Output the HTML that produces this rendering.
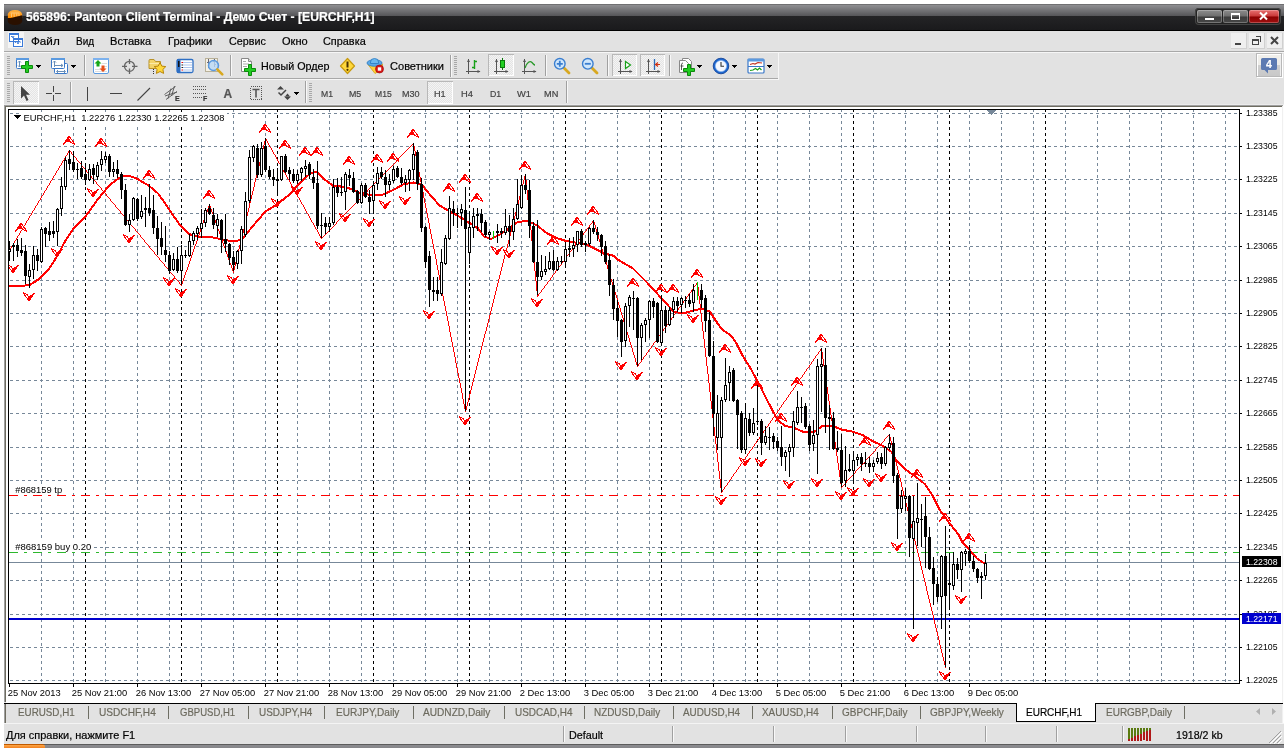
<!DOCTYPE html>
<html><head><meta charset="utf-8"><title>565896: Panteon Client Terminal</title>
<style>
html,body{margin:0;padding:0;background:#fff;}
body{width:1288px;height:748px;overflow:hidden;position:relative;font-family:"Liberation Sans",sans-serif;font-size:11px;color:#000;}
.a{position:absolute;}
.t{position:absolute;white-space:nowrap;line-height:1;-webkit-text-stroke:0.2px currentColor;}
svg{position:absolute;overflow:visible;}
</style></head><body><div id="w" style="position:absolute;left:0;top:0;width:1288px;height:748px;will-change:transform">
<div class="a" style="left:4px;top:4px;width:1280px;height:744px;background:#e2e2e2"></div>
<div class="a" style="left:4px;top:4px;width:1280px;height:27px;background:linear-gradient(#707072 0,#707072 1px,#8f8f92 1px,#555558 12px,#242426 12px,#1a1a1c 26px,#000 26px,#000 27px)"></div>
<svg width="16" height="16" viewBox="0 0 18 18" style="left:7px;top:8.5px"><linearGradient id="og" x1="0" y1="0" x2="0" y2="1"><stop offset="0" stop-color="#ffb347"/><stop offset="0.55" stop-color="#ff8c00"/><stop offset="0.56" stop-color="#3a1800"/><stop offset="1" stop-color="#1a0a00"/></linearGradient><path d="M1 6a8 5 0 0 1 16 0v7a8 4 0 0 1-16 0z" fill="url(#og)"/><path d="M1 11l16-4v7a8 4 0 0 1-16 0z" fill="#2a1000"/><path d="M4 4.500h10M5 5v4M8 5v4M11 5v3M13.500 5v3" stroke="#ffd9a0" stroke-width="1" fill="none" opacity=".8"/></svg>
<div class="t" style="left:26.4px;top:10.5px;font-size:12.5px;color:#fff;font-weight:bold;transform:scaleX(0.9755);transform-origin:0 0;">565896: Panteon Client Terminal - Демо Счет - [EURCHF,H1]</div>
<div class="a" style="left:1195px;top:8px;width:86px;height:17px;border-radius:4px;background:#222;box-shadow:inset 0 0 0 1px #444"></div>
<div class="a" style="left:1197px;top:10px;width:25px;height:13px;border-radius:2px;background:linear-gradient(#8c8c8c 0,#6e6e6e 48%,#3c3c3c 52%,#484848 100%);box-shadow:inset 0 0 0 1px rgba(255,255,255,.25)"></div>
<div class="a" style="left:1223px;top:10px;width:25px;height:13px;border-radius:2px;background:linear-gradient(#8c8c8c 0,#6e6e6e 48%,#3c3c3c 52%,#484848 100%);box-shadow:inset 0 0 0 1px rgba(255,255,255,.25)"></div>
<div class="a" style="left:1249px;top:10px;width:30px;height:13px;border-radius:2px;background:linear-gradient(#e87070 0,#c83838 48%,#8a0000 52%,#a01010 100%);box-shadow:inset 0 0 0 1px rgba(255,255,255,.25)"></div>
<svg width="86" height="17" viewBox="0 0 86 17" style="left:1195px;top:8px" shape-rendering="crispEdges"><rect x="10" y="10" width="9" height="2" fill="#fff"/><path d="M36.500 5.500h8v6h-8z" stroke="#fff" fill="none"/><rect x="36" y="5" width="9" height="2" fill="#fff"/><path d="M65 4.500l7 7M72 4.500l-7 7" stroke="#fff" stroke-width="2" fill="none" shape-rendering="auto"/></svg>
<svg width="16" height="16" viewBox="0 0 16 16" style="left:8px;top:32px" shape-rendering="crispEdges"><rect x="0" y="0" width="16" height="16" fill="#f4f4f4"/><path d="M1.500 1.500h9v8h-9zM5.500 6.500h9v8h-9z" fill="#fff" stroke="#3b7ad9"/><path d="M1 2.500h10M5 7.500h10" stroke="#3b7ad9" stroke-width="1"/><path d="M3 5l1-1 1 2 1-2M7 11l1.500-2 1.500 3 1.500-3 1 1.500" stroke="#3b7ad9" fill="none" shape-rendering="auto"/></svg>
<div class="t" style="left:30.6px;top:35.5px;font-size:11px;color:#000;transform:scaleX(1.0611);transform-origin:0 0;">Файл</div>
<div class="t" style="left:75.5px;top:35.5px;font-size:11px;color:#000;transform:scaleX(0.9093);transform-origin:0 0;">Вид</div>
<div class="t" style="left:110.4px;top:35.5px;font-size:11px;color:#000;transform:scaleX(1.0100);transform-origin:0 0;">Вставка</div>
<div class="t" style="left:168.4px;top:35.5px;font-size:11px;color:#000;transform:scaleX(1.0084);transform-origin:0 0;">Графики</div>
<div class="t" style="left:228.6px;top:35.5px;font-size:11px;color:#000;transform:scaleX(0.9795);transform-origin:0 0;">Сервис</div>
<div class="t" style="left:281.6px;top:35.5px;font-size:11px;color:#000;transform:scaleX(1.0015);transform-origin:0 0;">Окно</div>
<div class="t" style="left:323.3px;top:35.5px;font-size:11px;color:#000;transform:scaleX(0.9894);transform-origin:0 0;">Справка</div>
<div class="a" style="left:1231px;top:33px;width:16px;height:16px;background:#efefef;box-shadow:inset -1px -1px 0 #d0d0d0"></div>
<div class="a" style="left:1249px;top:33px;width:16px;height:16px;background:#efefef;box-shadow:inset -1px -1px 0 #d0d0d0"></div>
<div class="a" style="left:1267px;top:33px;width:16px;height:16px;background:#efefef;box-shadow:inset -1px -1px 0 #d0d0d0"></div>
<svg width="52" height="16" viewBox="0 0 52 16" style="left:1231px;top:33px" shape-rendering="crispEdges"><rect x="4" y="10" width="6" height="2" fill="#444"/><path d="M24.500 3.500h5v5M21.500 6.500h6v5h-6z" stroke="#444" fill="none"/><rect x="21" y="6" width="7" height="2" fill="#444"/><path d="M40 4l7 7M47 4l-7 7" stroke="#444" stroke-width="2" fill="none" shape-rendering="auto"/></svg>
<div class="a" style="left:4px;top:51px;width:1280px;height:1px;background:#a8a8a8"></div><div class="a" style="left:4px;top:52px;width:1280px;height:1px;background:#f6f6f6"></div>
<div class="a" style="left:4px;top:78px;width:775px;height:1px;background:#a8a8a8"></div><div class="a" style="left:4px;top:79px;width:775px;height:1px;background:#f6f6f6"></div>
<div class="a" style="left:778px;top:53px;width:1px;height:26px;background:#f6f6f6"></div>
<div class="a" style="left:4px;top:104px;width:1280px;height:1px;background:#ebebeb"></div>
<div class="a" style="left:4px;top:105px;width:1279px;height:1px;background:#a0a0a0"></div>
<div class="a" style="left:4px;top:105px;width:1px;height:597px;background:#a0a0a0"></div>
<div class="a" style="left:5px;top:106px;width:1277px;height:1px;background:#6e6c60"></div>
<div class="a" style="left:5px;top:106px;width:1px;height:596px;background:#6e6c60"></div>
<div class="a" style="left:6px;top:107px;width:1276px;height:2px;background:#fff"></div>
<div class="a" style="left:6px;top:107px;width:2px;height:596px;background:#fff"></div>
<div class="a" style="left:1282px;top:106px;width:1px;height:617px;background:#f0f0f0"></div>
<div class="a" style="left:1283px;top:105px;width:1px;height:618px;background:#fdfdfd"></div>
<svg width="4" height="20" style="left:7px;top:56px" shape-rendering="crispEdges"><path d="M0 0.5h3M0 2.5h3M0 4.5h3M0 6.5h3M0 8.5h3M0 10.5h3M0 12.5h3M0 14.5h3M0 16.5h3M0 18.5h3" stroke="#a8a8a8"/></svg>
<svg width="4" height="20" style="left:454px;top:56px" shape-rendering="crispEdges"><path d="M0 0.5h3M0 2.5h3M0 4.5h3M0 6.5h3M0 8.5h3M0 10.5h3M0 12.5h3M0 14.5h3M0 16.5h3M0 18.5h3" stroke="#a8a8a8"/></svg>
<svg width="4" height="20" style="left:7px;top:83px" shape-rendering="crispEdges"><path d="M0 0.5h3M0 2.5h3M0 4.5h3M0 6.5h3M0 8.5h3M0 10.5h3M0 12.5h3M0 14.5h3M0 16.5h3M0 18.5h3" stroke="#a8a8a8"/></svg>
<svg width="4" height="20" style="left:309px;top:83px" shape-rendering="crispEdges"><path d="M0 0.5h3M0 2.5h3M0 4.5h3M0 6.5h3M0 8.5h3M0 10.5h3M0 12.5h3M0 14.5h3M0 16.5h3M0 18.5h3" stroke="#a8a8a8"/></svg>
<div class="a" style="left:450px;top:55px;width:1px;height:22px;background:#a0a0a0"></div><div class="a" style="left:451px;top:55px;width:1px;height:22px;background:#f8f8f8"></div>
<div class="a" style="left:305px;top:81px;width:1px;height:22px;background:#a0a0a0"></div><div class="a" style="left:306px;top:81px;width:1px;height:22px;background:#f8f8f8"></div>
<div class="a" style="left:566px;top:81px;width:1px;height:22px;background:#a0a0a0"></div><div class="a" style="left:567px;top:81px;width:1px;height:22px;background:#f8f8f8"></div><svg width="20" height="18" viewBox="0 0 20 18" style="left:15px;top:57px"><rect x="1.500" y="1.500" width="12" height="10" rx="1" fill="#fff" stroke="#3a78c8"/><rect x="1" y="1" width="13" height="2" fill="#5b9ae0"/><path d="M4.500 4v6M3 5.500l1.500-1.500 1.500 1.500M3 8.500l1.500 1.500 1.500-1.500" stroke="#6a8fb8" fill="none"/><path d="M10.500 4.500h3v4h4v3h-4v4h-3v-4h-4v-3h4z" fill="#22cc22" stroke="#0a8a0a" stroke-width="1"/></svg>
<svg width="5" height="3" style="left:36px;top:65px" shape-rendering="crispEdges"><path d="M0 0h5v1h-1v1h-1v1h-1v-1h-1v-1h-1z" fill="#000"/></svg>
<svg width="20" height="18" viewBox="0 0 20 18" style="left:50px;top:57px"><rect x="4.500" y="6.500" width="13" height="10" rx="1" fill="#fff" stroke="#3a78c8"/><rect x="1.500" y="1.500" width="13" height="10" rx="1" fill="#fff" stroke="#3a78c8"/><rect x="1" y="1" width="14" height="2" fill="#5b9ae0"/><path d="M4.500 4v6M3 5.500l1.500-1.500 1.500 1.500M5 8.500h8M11 7l2 1.500-2 1.500M7 14.500h8M8 13l-1.500 1.500 1.500 1.500M14 13l1.500 1.500-1.500 1.500" stroke="#6a8fb8" fill="none"/></svg>
<svg width="5" height="3" style="left:71px;top:65px" shape-rendering="crispEdges"><path d="M0 0h5v1h-1v1h-1v1h-1v-1h-1v-1h-1z" fill="#000"/></svg>
<div class="a" style="left:84px;top:55px;width:1px;height:21px;background:#a0a0a0"></div><div class="a" style="left:85px;top:55px;width:1px;height:21px;background:#f8f8f8"></div>
<svg width="16" height="16" viewBox="0 0 16 16" style="left:93px;top:58px"><rect x="0.500" y="0.500" width="15" height="15" rx="1.500" fill="#fff" stroke="#5b9ae0"/><rect x="0" y="0" width="16" height="2" fill="#7db2ee"/><path d="M9 5.500h5M9 8.500h5M2 11.500h5M2 13.500h12" stroke="#ddd"/><path d="M5 2l3.500 3.500h-2v3h-3v-3h-2z" fill="#18a818"/><path d="M10 14l-3.500-3.500h2v-3h3v3h2z" fill="#e8501a"/></svg>
<svg width="18" height="17" viewBox="0 0 18 17" style="left:121px;top:58px"><circle cx="8.500" cy="8.300" r="5" fill="none" stroke="#666" stroke-width="1.300"/><path d="M8.500 1v5M8.500 10.500v5.500M1 8.300h5M11 8.300h5.500" stroke="#666" stroke-width="1.300"/></svg>
<svg width="19" height="18" viewBox="0 0 19 18" style="left:148px;top:57px"><path d="M1 3.500a1 1 0 0 1 1-1h4l1.500 2h5v7h-11.500z" fill="#f3d46b" stroke="#b8922a"/><path d="M1.500 6.500h11" stroke="#fbeaa8"/><path d="M5.500 12v5" stroke="#333" stroke-dasharray="1 1"/><path d="M12 5.500l1.800 3.600 4 .5-2.900 2.800.7 4-3.600-1.900-3.600 1.900.7-4-2.900-2.800 4-.5z" fill="#ffd83a" stroke="#b8860b" stroke-width="1"/></svg>
<svg width="18" height="16" viewBox="0 0 18 16" style="left:176px;top:58px"><rect x="1" y="1.500" width="16" height="13" rx="1.500" fill="#fff" stroke="#2e6fc4" stroke-width="1.300"/><rect x="1" y="1" width="3.500" height="14" fill="#2e6fc4"/><rect x="2" y="3" width="1.500" height="6" fill="#111"/><path d="M7 4.500h9M7 7h9M7 9.500h9M7 12h9" stroke="#9ab8e8" stroke-width=".8"/><path d="M5.500 4h1.500v1h-1.500zM5.500 11.500h1.500v1h-1.500z" fill="#e00"/><path d="M5.500 6.500h1.500v1h-1.500zM5.500 9h1.500v1h-1.500z" fill="#222"/></svg>
<svg width="20" height="20" viewBox="0 0 20 20" style="left:204px;top:57px"><rect x="1.500" y="1.500" width="12" height="13" fill="#f4f0e4" stroke="#b8b098"/><path d="M4.500 2v9M3 5.500h1.500M4.500 8h1.500M10.500 2v8M9 4.500h1.500M10.500 7.500h1.500" stroke="#667" /><circle cx="9.500" cy="8.500" r="5" fill="#b8d8f8" fill-opacity=".8" stroke="#5b9ae0" stroke-width="1.500"/><path d="M13.300 12.300l5 5" stroke="#d8a820" stroke-width="2.600" stroke-linecap="round"/></svg>
<div class="a" style="left:230px;top:55px;width:1px;height:21px;background:#a0a0a0"></div><div class="a" style="left:231px;top:55px;width:1px;height:21px;background:#f8f8f8"></div>
<svg width="17" height="20" viewBox="0 0 17 20" style="left:240px;top:57px"><path d="M1.500 1.500h7l3 3v10h-10z" fill="#fff" stroke="#888"/><path d="M8.500 1.500v3h3" fill="#ddd" stroke="#888"/><path d="M3 4.500h3M3 7h6M3 9.500h4" stroke="#aaa"/><path d="M8.500 7.500h3v4h4v3h-4v4h-3v-4h-4v-3h4z" fill="#22cc22" stroke="#0a8a0a"/></svg>
<div class="t" style="left:260.5px;top:61px;font-size:11px;color:#000;transform:scaleX(0.9773);transform-origin:0 0;">Новый Ордер</div>
<svg width="17" height="18" viewBox="0 0 17 18" style="left:339px;top:57px"><path d="M8.500 1.500l7 7.500-7 7.500-7-7.500z" fill="#ffd83a" stroke="#c89a10" stroke-width="1.200" stroke-linejoin="round"/><path d="M8.500 4.500v6" stroke="#4a3200" stroke-width="2"/><circle cx="8.500" cy="12.800" r="1.100" fill="#4a3200"/></svg>
<svg width="19" height="18" viewBox="0 0 19 18" style="left:366px;top:57px"><path d="M2 7.500l7 9 7-4.500.5-5z" fill="#ffd23a" stroke="#d8a010" stroke-width=".8"/><ellipse cx="8.500" cy="6" rx="7.500" ry="3.300" fill="#5aa8e8" stroke="#2a78c0" stroke-width=".8"/><path d="M4.500 5a4 3.500 0 0 1 8 0v1.500h-8z" fill="#6ab8f0" stroke="#2a78c0" stroke-width=".8"/><circle cx="13.500" cy="12" r="4" fill="#d81818" stroke="#900" stroke-width=".6"/><rect x="11.800" y="10.300" width="3.400" height="3.400" fill="#fff"/></svg>
<div class="t" style="left:390px;top:61px;font-size:11px;color:#000;transform:scaleX(1.0047);transform-origin:0 0;">Советники</div>
<svg width="16" height="16" viewBox="0 0 16 16" style="left:466px;top:58px"><path d="M2.500 1v15M0 13.500h14" stroke="#555" stroke-width="1" shape-rendering="crispEdges"/><path d="M1 4h3l-1.500-3zM11.500 12v3l3-1.500z" fill="#555"/><path d="M8.500 2v9M8.500 3.500h2.500M6 9.500h2.500" stroke="#18a018" stroke-width="1.400" fill="none"/></svg>
<div class="a" style="left:488px;top:54px;width:26px;height:22px;background:#f4f4f4;box-shadow:inset 1px 1px 0 #b8b8b8, inset -1px -1px 0 #fff;background-image:linear-gradient(45deg,#e4e4e4 25%,transparent 25%,transparent 75%,#e4e4e4 75%),linear-gradient(45deg,#e4e4e4 25%,transparent 25%,transparent 75%,#e4e4e4 75%);background-size:2px 2px;background-position:0 0,1px 1px"></div>
<svg width="16" height="16" viewBox="0 0 16 16" style="left:494px;top:58px"><path d="M2.500 1v15M0 13.500h14" stroke="#555" stroke-width="1" shape-rendering="crispEdges"/><path d="M1 4h3l-1.500-3zM11.500 12v3l3-1.500z" fill="#555"/><path d="M8.500 0v12" stroke="#0a7a0a"/><rect x="6.500" y="2.500" width="4" height="7" fill="#22d022" stroke="#0a7a0a"/></svg>
<svg width="16" height="16" viewBox="0 0 16 16" style="left:522px;top:58px"><path d="M2.500 1v15M0 13.500h14" stroke="#555" stroke-width="1" shape-rendering="crispEdges"/><path d="M1 4h3l-1.500-3zM11.500 12v3l3-1.500z" fill="#555"/><path d="M3 10c2-6 5-7.500 7-5.500s2 2.500 3 2.500" stroke="#2a9a2a" stroke-width="1.300" fill="none"/></svg>
<div class="a" style="left:545px;top:55px;width:1px;height:21px;background:#a0a0a0"></div><div class="a" style="left:546px;top:55px;width:1px;height:21px;background:#f8f8f8"></div>
<svg width="18" height="18" viewBox="0 0 18 18" style="left:553px;top:57px"><path d="M10.500 10.500l5.500 5.500" stroke="#d8a820" stroke-width="2.800" stroke-linecap="round"/><circle cx="6.800" cy="6.800" r="5.300" fill="#cfe6fb" stroke="#3a7ed0" stroke-width="1.400"/><path d="M3.800 6.800h6M6.800 3.800v6" stroke="#3a7ed0" stroke-width="1.800"/></svg>
<svg width="18" height="18" viewBox="0 0 18 18" style="left:581px;top:57px"><path d="M10.500 10.500l5.500 5.500" stroke="#d8a820" stroke-width="2.800" stroke-linecap="round"/><circle cx="6.800" cy="6.800" r="5.300" fill="#cfe6fb" stroke="#3a7ed0" stroke-width="1.400"/><path d="M3.800 6.800h6" stroke="#3a7ed0" stroke-width="1.800"/></svg>
<div class="a" style="left:607px;top:55px;width:1px;height:21px;background:#a0a0a0"></div><div class="a" style="left:608px;top:55px;width:1px;height:21px;background:#f8f8f8"></div>
<div class="a" style="left:612px;top:54px;width:25px;height:22px;background:#f4f4f4;box-shadow:inset 1px 1px 0 #b8b8b8, inset -1px -1px 0 #fff;background-image:linear-gradient(45deg,#e4e4e4 25%,transparent 25%,transparent 75%,#e4e4e4 75%),linear-gradient(45deg,#e4e4e4 25%,transparent 25%,transparent 75%,#e4e4e4 75%);background-size:2px 2px;background-position:0 0,1px 1px"></div>
<svg width="16" height="16" viewBox="0 0 16 16" style="left:618px;top:58px"><path d="M2.500 1v15M0 13.500h14" stroke="#555" stroke-width="1" shape-rendering="crispEdges"/><path d="M1 4h3l-1.500-3zM11.500 12v3l3-1.500z" fill="#555"/><path d="M7.500 3.500l5 3.500-5 3.500z" fill="#fff" stroke="#18a018" stroke-width="1.200"/></svg>
<div class="a" style="left:640px;top:54px;width:25px;height:22px;background:#f4f4f4;box-shadow:inset 1px 1px 0 #b8b8b8, inset -1px -1px 0 #fff;background-image:linear-gradient(45deg,#e4e4e4 25%,transparent 25%,transparent 75%,#e4e4e4 75%),linear-gradient(45deg,#e4e4e4 25%,transparent 25%,transparent 75%,#e4e4e4 75%);background-size:2px 2px;background-position:0 0,1px 1px"></div>
<svg width="16" height="16" viewBox="0 0 16 16" style="left:646px;top:58px"><path d="M2.500 1v15M0 13.500h14" stroke="#555" stroke-width="1" shape-rendering="crispEdges"/><path d="M1 4h3l-1.500-3zM11.500 12v3l3-1.500z" fill="#555"/><path d="M8.500 1v11" stroke="#2a6ab8" stroke-width="1.300"/><path d="M14 6.500h-4M12 4.500l-2.500 2 2.500 2" stroke="#d03010" stroke-width="1.200" fill="none"/></svg>
<div class="a" style="left:669px;top:55px;width:1px;height:21px;background:#a0a0a0"></div><div class="a" style="left:670px;top:55px;width:1px;height:21px;background:#f8f8f8"></div>
<svg width="18" height="20" viewBox="0 0 18 20" style="left:678px;top:57px"><path d="M4.500 1.500h6l3 3v9h-9z" fill="#fff" stroke="#888"/><path d="M1.500 3.500h6l3 3v9h-9z" fill="#fff" stroke="#888"/><path d="M5 6c-1.500 0-1.500 1.500-1.500 3v4M2.500 9h3" stroke="#444" fill="none" stroke-width=".9"/><path d="M9.500 7.500h3v4h4v3h-4v4h-3v-4h-4v-3h4z" fill="#22cc22" stroke="#0a8a0a"/></svg>
<svg width="5" height="3" style="left:697px;top:65px" shape-rendering="crispEdges"><path d="M0 0h5v1h-1v1h-1v1h-1v-1h-1v-1h-1z" fill="#000"/></svg>
<svg width="18" height="18" viewBox="0 0 18 18" style="left:712px;top:57px"><circle cx="9" cy="9" r="7.800" fill="#1e68d0" stroke="#0a3a90" stroke-width=".8"/><circle cx="9" cy="9" r="5.600" fill="#f4f8ff" stroke="#9ac0f0" stroke-width=".6"/><path d="M9 5v4.300h3" stroke="#333" stroke-width="1.100" fill="none"/></svg>
<svg width="5" height="3" style="left:732px;top:65px" shape-rendering="crispEdges"><path d="M0 0h5v1h-1v1h-1v1h-1v-1h-1v-1h-1z" fill="#000"/></svg>
<svg width="18" height="16" viewBox="0 0 18 16" style="left:747px;top:58px"><rect x="1" y="1" width="16" height="14" rx="1" fill="#fff" stroke="#3a78c8" stroke-width="1.200"/><rect x="1" y="1" width="16" height="2.500" fill="#5b9ae0"/><path d="M1 8.500h16" stroke="#3a78c8"/><path d="M3 6.500l3-1 2 .5 3-1.500 4 .5" stroke="#c03020" stroke-width="1.200" fill="none"/><path d="M3 12.500l3-.5 2.500-1.500 2 1.500 2-2 2 2" stroke="#18a018" stroke-width="1.200" fill="none"/></svg>
<svg width="5" height="3" style="left:767px;top:65px" shape-rendering="crispEdges"><path d="M0 0h5v1h-1v1h-1v1h-1v-1h-1v-1h-1z" fill="#000"/></svg>
<div class="a" style="left:1256px;top:53px;width:26px;height:24px;box-sizing:border-box;border:1px solid #b8b8b8;background:linear-gradient(#f0efeb 0,#eeede9 50%,#d0d0d0 50%,#c8c8c8 100%);box-shadow:inset 1px 1px 0 #fff,inset -1px 0 0 #eee,1px 1px 0 #fff"></div>
<svg width="16" height="16" viewBox="0 0 16 16" style="left:1261px;top:58px"><path d="M1.500 0h13a1.500 1.500 0 0 1 1.500 1.500v9a1.500 1.500 0 0 1-1.500 1.500h-7.500v3.500l-3.500-3.500h-2a1.500 1.500 0 0 1-1.500-1.500v-9a1.500 1.500 0 0 1 1.500-1.500z" fill="#5c7ab2"/></svg>
<div class="t" style="left:1266px;top:58.5px;font-size:10.5px;color:#fff;font-weight:bold;">4</div>
<div class="a" style="left:13px;top:81px;width:26px;height:23px;background:#f4f4f4;box-shadow:inset 1px 1px 0 #b8b8b8, inset -1px -1px 0 #fff;background-image:linear-gradient(45deg,#e4e4e4 25%,transparent 25%,transparent 75%,#e4e4e4 75%),linear-gradient(45deg,#e4e4e4 25%,transparent 25%,transparent 75%,#e4e4e4 75%);background-size:2px 2px;background-position:0 0,1px 1px"></div>
<svg width="12" height="17" viewBox="0 0 12 17" style="left:19px;top:85px"><path d="M2 1v12.500l3-3 2.500 5.500 2-1-2.500-5.300h4z" fill="#444"/></svg>
<svg width="17" height="17" viewBox="0 0 17 17" style="left:45px;top:85px"><path d="M8.500 1v6M8.500 10v6M1 8.500h6M10 8.500h6" stroke="#444" stroke-width="1" shape-rendering="crispEdges"/></svg>
<div class="a" style="left:70px;top:82px;width:1px;height:21px;background:#a0a0a0"></div><div class="a" style="left:71px;top:82px;width:1px;height:21px;background:#f8f8f8"></div>
<svg width="3" height="15" viewBox="0 0 3 15" style="left:86px;top:86px"><path d="M1.500 0.500v14" stroke="#444" shape-rendering="crispEdges"/></svg>
<svg width="14" height="3" viewBox="0 0 14 3" style="left:109px;top:92px"><path d="M1 1.500h12" stroke="#444" shape-rendering="crispEdges"/></svg>
<svg width="16" height="16" viewBox="0 0 16 16" style="left:136px;top:86px"><path d="M1.500 14.500l12.500-12.500" stroke="#444" stroke-width="1.100"/></svg>
<svg width="18" height="19" viewBox="0 0 18 19" style="left:163px;top:84px"><path d="M1.500 10.500l11-8M3 15.500l11-8M2 12l12-4M5 14.500l3-10M8.500 12l3-10" stroke="#555" stroke-width=".9" fill="none"/></svg>
<div class="t" style="left:175px;top:95px;font-size:7px;color:#333;font-weight:bold;">E</div>
<svg width="16" height="16" viewBox="0 0 16 16" style="left:192px;top:85px"><path d="M1 1.500h14M1 4.500h14M1 8.500h14M1 12.500h9" stroke="#555" stroke-dasharray="1 1" shape-rendering="crispEdges"/></svg>
<div class="t" style="left:203px;top:95px;font-size:7px;color:#333;font-weight:bold;">F</div>
<div class="t" style="left:223.5px;top:87.5px;font-size:12px;color:#555;font-weight:bold;">A</div>
<svg width="15" height="17" viewBox="0 0 15 17" style="left:249px;top:85px"><rect x="1.500" y="1.500" width="11" height="13" fill="none" stroke="#555" stroke-dasharray="1 1" shape-rendering="crispEdges"/><path d="M3.500 4.500h7M7 4.500v8" stroke="#555" stroke-width="1.600"/></svg>
<svg width="16" height="17" viewBox="0 0 16 17" style="left:276px;top:85px"><path d="M4.500 1l3.500 3.500h-7zM11.500 15l-3.500-3.500h7z" fill="#444"/><path d="M2.500 7.500l2.500 2.500 5-5" stroke="#444" stroke-width="1.500" fill="none"/><path d="M9 11.500l2.500-3 2.500 3z" fill="#444"/></svg>
<svg width="5" height="3" style="left:294px;top:92px" shape-rendering="crispEdges"><path d="M0 0h5v1h-1v1h-1v1h-1v-1h-1v-1h-1z" fill="#000"/></svg>
<div class="a" style="left:427px;top:81px;width:26px;height:23px;background:#f4f4f4;box-shadow:inset 1px 1px 0 #b8b8b8, inset -1px -1px 0 #fff;background-image:linear-gradient(45deg,#e4e4e4 25%,transparent 25%,transparent 75%,#e4e4e4 75%),linear-gradient(45deg,#e4e4e4 25%,transparent 25%,transparent 75%,#e4e4e4 75%);background-size:2px 2px;background-position:0 0,1px 1px"></div>
<div class="t" style="left:321px;top:88.5px;font-size:9.5px;color:#444;transform:scaleX(0.9089);transform-origin:0 0;">M1</div>
<div class="t" style="left:348.7px;top:88.5px;font-size:9.5px;color:#444;transform:scaleX(0.9316);transform-origin:0 0;">M5</div>
<div class="t" style="left:375px;top:88.5px;font-size:9.5px;color:#444;transform:scaleX(0.9035);transform-origin:0 0;">M15</div>
<div class="t" style="left:402.4px;top:88.5px;font-size:9.5px;color:#444;transform:scaleX(0.9522);transform-origin:0 0;">M30</div>
<div class="t" style="left:433.5px;top:88.5px;font-size:9.5px;color:#444;transform:scaleX(0.9625);transform-origin:0 0;">H1</div>
<div class="t" style="left:460.8px;top:88.5px;font-size:9.5px;color:#444;transform:scaleX(0.9789);transform-origin:0 0;">H4</div>
<div class="t" style="left:489.7px;top:88.5px;font-size:9.5px;color:#444;transform:scaleX(0.9213);transform-origin:0 0;">D1</div>
<div class="t" style="left:517px;top:88.5px;font-size:9.5px;color:#444;transform:scaleX(0.9825);transform-origin:0 0;">W1</div>
<div class="t" style="left:543.7px;top:88.5px;font-size:9.5px;color:#444;transform:scaleX(0.9674);transform-origin:0 0;">MN</div><svg width="1288" height="748" viewBox="0 0 1288 748" style="left:0;top:0" shape-rendering="crispEdges">
<rect x="6" y="107" width="1276" height="596" fill="#fff"/>
<clipPath id="cc"><rect x="9" y="110" width="1230" height="573"/></clipPath>
<g clip-path="url(#cc)">
<path d="M10 113.5H1239M10 146.5H1239M10 179.5H1239M10 213.5H1239M10 246.5H1239M10 280.5H1239M10 313.5H1239M10 346.5H1239M10 380.5H1239M10 413.5H1239M10 447.5H1239M10 480.5H1239M10 513.5H1239M10 547.5H1239M10 580.5H1239M10 614.5H1239M10 647.5H1239M10 680.5H1239M41.5 109V683M73.5 109V683M105.5 109V683M137.5 109V683M169.5 109V683M201.5 109V683M233.5 109V683M265.5 109V683M297.5 109V683M329.5 109V683M361.5 109V683M393.5 109V683M425.5 109V683M457.5 109V683M489.5 109V683M521.5 109V683M553.5 109V683M585.5 109V683M617.5 109V683M649.5 109V683M681.5 109V683M713.5 109V683M745.5 109V683M777.5 109V683M809.5 109V683M841.5 109V683M873.5 109V683M905.5 109V683M937.5 109V683M969.5 109V683M1001.5 109V683M1033.5 109V683M1065.5 109V683M1097.5 109V683M1129.5 109V683M1161.5 109V683M1193.5 109V683M1225.5 109V683" stroke="#778899" stroke-width="1" stroke-dasharray="3 3" fill="none"/>
<path d="M85.5 109V683M181.5 109V683M277.5 109V683M373.5 109V683M469.5 109V683M565.5 109V683M661.5 109V683M757.5 109V683M853.5 109V683M949.5 109V683M1045.5 109V683" stroke="#000" stroke-width="1" stroke-dasharray="3 3" fill="none"/>
<path d="M9 495.5H1239" stroke="#f00" stroke-dasharray="9 6 3 6" fill="none"/>
<path d="M9 552.5H1239" stroke="#2db82d" stroke-dasharray="9 6 3 6" fill="none"/>
<path d="M9 562.5H1239" stroke="#778899" fill="none"/>
<rect x="9" y="618" width="1230" height="2" fill="#0000cd"/>
<polyline points="4.0,285.9 8.8,285.9 18.4,286.4 30.4,284.7 37.7,279.9 49.7,267.9 57.4,255.8 65.6,240.2 73.7,228.2 85.8,216.2 97.8,199.3 109.8,184.9 121.3,176.5 129.5,175.8 137.4,178.9 149.5,186.1 157.9,193.3 164.0,201.8 173.6,216.2 181.6,227.0 189.5,234.2 197.7,236.6 212.1,237.3 225.6,240.2 236.1,241.4 243.3,237.8 253.0,225.8 265.5,211.4 277.5,204.2 289.5,194.5 301.5,181.3 309.5,174.1 316.7,171.7 324.0,178.9 333.6,186.1 345.6,186.8 357.7,192.1 369.7,195.0 381.7,195.0 393.7,189.7 403.3,184.4 413.4,182.5 421.6,184.4 429.8,194.5 439.4,205.4 449.5,211.4 458.6,216.2 468.3,222.2 477.9,228.2 484.0,236.6 491.2,239.0 498.4,235.4 508.0,229.3 517.7,222.1 527.3,220.9 537.4,225.7 546.5,233.0 556.1,237.8 565.8,240.9 575.4,242.6 585.0,243.8 594.6,248.6 604.2,253.4 613.8,255.8 618.4,260.0 632.9,268.4 647.3,282.8 661.7,298.5 673.7,311.7 683.3,313.4 695.4,310.0 702.6,308.8 709.8,311.7 717.0,322.5 722.5,330.0 727.8,333.3 732.1,337.2 736.2,343.0 741.7,354.0 751.3,369.7 760.9,387.7 770.6,406.9 777.8,420.2 785.0,425.7 794.6,428.1 804.2,432.2 813.8,432.2 822.5,425.9 832.2,425.9 841.8,429.6 852.9,431.7 862.5,434.9 872.1,440.9 881.7,445.2 891.3,451.7 896.1,460.1 905.8,469.7 915.4,476.5 925.0,484.2 932.2,495.0 939.4,509.4 949.0,522.6 958.6,534.6 962.6,542.8 969.8,550.1 977.0,558.5 984.2,563.3" stroke="#f00" stroke-width="2" fill="none" stroke-linejoin="round"/>
<path d="M-2.5 270v1M-1.5 268v2M-0.5 266v2M0.5 265v1M1.5 263v2M2.5 261v2M3.5 260v1M4.5 258v2M5.5 256v2M6.5 255v1M7.5 253v2M8.5 251v2M9.5 250v1M10.5 248v2M11.5 246v2M12.5 245v1M13.5 243v2M14.5 241v2M15.5 240v1M16.5 238v2M17.5 236v2M18.5 235v1M19.5 233v2M20.5 231v2M21.5 230v1M22.5 228v2M23.5 226v2M24.5 225v1M25.5 223v2M26.5 221v2M27.5 220v1M28.5 218v2M29.5 216v2M30.5 215v1M31.5 213v2M32.5 211v2M33.5 210v1M34.5 208v2M35.5 206v2M36.5 205v1M37.5 203v2M38.5 201v2M39.5 200v1M40.5 198v2M41.5 196v2M42.5 195v1M43.5 193v2M44.5 191v2M45.5 190v1M46.5 188v2M47.5 186v2M48.5 185v1M49.5 183v2M50.5 181v2M51.5 180v1M52.5 178v2M53.5 176v2M54.5 175v1M55.5 173v2M56.5 171v2M57.5 170v1M58.5 168v2M59.5 166v2M60.5 165v1M61.5 163v2M62.5 161v2M63.5 160v1M64.5 158v2M65.5 156v2M66.5 155v1M67.5 153v2M68.5 151v2M69.5 150v1M69.5 150v1M70.5 151v1M71.5 152v2M72.5 154v1M73.5 155v1M74.5 156v1M75.5 157v1M76.5 158v2M77.5 160v1M78.5 161v1M79.5 162v1M80.5 163v1M81.5 164v2M82.5 166v1M83.5 167v1M84.5 168v1M85.5 169v1M86.5 170v2M87.5 172v1M88.5 173v1M89.5 174v1M90.5 175v1M91.5 176v2M92.5 178v1M93.5 179v1M94.5 180v1M95.5 181v1M96.5 182v2M97.5 184v1M98.5 185v1M99.5 186v1M100.5 187v1M101.5 188v2M102.5 190v1M103.5 191v1M104.5 192v1M105.5 193v1M106.5 194v2M107.5 196v1M108.5 197v1M109.5 198v1M110.5 199v2M111.5 201v1M112.5 202v1M113.5 203v1M114.5 204v1M115.5 205v2M116.5 207v1M117.5 208v1M118.5 209v1M119.5 210v1M120.5 211v2M121.5 213v1M122.5 214v1M123.5 215v1M124.5 216v1M125.5 217v2M126.5 219v1M127.5 220v1M128.5 221v1M129.5 222v1M130.5 223v2M131.5 225v1M132.5 226v1M133.5 227v1M134.5 228v1M135.5 229v2M136.5 231v1M137.5 232v1M138.5 233v1M139.5 234v1M140.5 235v2M141.5 237v1M142.5 238v1M143.5 239v1M144.5 240v2M145.5 242v1M146.5 243v1M147.5 244v1M148.5 245v1M149.5 246v2M150.5 248v1M151.5 249v1M152.5 250v1M153.5 251v1M154.5 252v2M155.5 254v1M156.5 255v1M157.5 256v1M158.5 257v1M159.5 258v2M160.5 260v1M161.5 261v1M162.5 262v1M163.5 263v1M164.5 264v2M165.5 266v1M166.5 267v1M167.5 268v1M168.5 269v1M169.5 270v2M170.5 272v1M171.5 273v1M172.5 274v1M173.5 275v1M174.5 276v2M175.5 278v1M176.5 279v1M177.5 280v1M178.5 281v1M179.5 282v2M180.5 284v1M181.5 285v1M181.5 284v2M182.5 281v3M183.5 278v3M184.5 275v3M185.5 272v3M186.5 270v2M187.5 267v3M188.5 264v3M189.5 261v3M190.5 258v3M191.5 255v3M192.5 252v3M193.5 249v3M194.5 246v3M195.5 244v2M196.5 241v3M197.5 238v3M198.5 235v3M199.5 232v3M200.5 229v3M201.5 226v3M202.5 223v3M203.5 220v3M204.5 218v2M205.5 215v3M206.5 212v3M207.5 209v3M208.5 206v3M209.5 204v2M209.5 204v2M210.5 206v3M211.5 209v3M212.5 212v2M213.5 214v3M214.5 217v3M215.5 220v3M216.5 223v3M217.5 226v3M218.5 229v2M219.5 231v3M220.5 234v3M221.5 237v3M222.5 240v3M223.5 243v3M224.5 246v2M225.5 248v3M226.5 251v3M227.5 254v3M228.5 257v3M229.5 260v3M230.5 263v2M231.5 265v3M232.5 268v3M233.5 271v2M233.5 270v3M234.5 266v4M235.5 262v4M236.5 258v4M237.5 254v4M238.5 249v5M239.5 245v4M240.5 241v4M241.5 237v4M242.5 233v4M243.5 229v4M244.5 224v5M245.5 220v4M246.5 216v4M247.5 212v4M248.5 208v4M249.5 203v5M250.5 199v4M251.5 195v4M252.5 191v4M253.5 187v4M254.5 182v5M255.5 178v4M256.5 174v4M257.5 170v4M258.5 166v4M259.5 162v4M260.5 157v5M261.5 153v4M262.5 149v4M263.5 145v4M264.5 141v4M265.5 138v3M265.5 138v1M266.5 139v2M267.5 141v2M268.5 143v2M269.5 145v2M270.5 147v1M271.5 148v2M272.5 150v2M273.5 152v2M274.5 154v1M275.5 155v2M276.5 157v2M277.5 159v2M278.5 161v2M279.5 163v1M280.5 164v2M281.5 166v2M282.5 168v2M283.5 170v2M284.5 172v1M285.5 173v2M286.5 175v2M287.5 177v2M288.5 179v1M289.5 180v2M290.5 182v2M291.5 184v2M292.5 186v2M293.5 188v1M294.5 189v2M295.5 191v2M296.5 193v2M297.5 195v2M298.5 197v1M299.5 198v2M300.5 200v2M301.5 202v2M302.5 204v1M303.5 205v2M304.5 207v2M305.5 209v2M306.5 211v2M307.5 213v1M308.5 214v2M309.5 216v2M310.5 218v2M311.5 220v2M312.5 222v1M313.5 223v2M314.5 225v2M315.5 227v2M316.5 229v1M317.5 230v2M318.5 232v2M319.5 234v2M320.5 236v2M321.5 238v1M321.5 238v1M322.5 237v1M323.5 236v1M324.5 235v1M325.5 234v1M326.5 233v1M327.5 232v1M328.5 231v1M329.5 230v1M330.5 229v1M331.5 228v1M332.5 227v1M333.5 226v1M334.5 225v1M335.5 224v1M336.5 222v2M337.5 221v1M338.5 220v1M339.5 219v1M340.5 218v1M341.5 217v1M342.5 216v1M343.5 215v1M344.5 214v1M345.5 213v1M346.5 212v1M347.5 211v1M348.5 210v1M349.5 209v1M350.5 208v1M351.5 207v1M352.5 206v1M353.5 205v1M354.5 204v1M355.5 203v1M356.5 202v1M357.5 201v1M358.5 200v1M359.5 199v1M360.5 198v1M361.5 197v1M362.5 196v1M363.5 195v1M364.5 194v1M365.5 193v1M366.5 192v1M367.5 190v2M368.5 189v1M369.5 188v1M370.5 187v1M371.5 186v1M372.5 185v1M373.5 184v1M374.5 183v1M375.5 182v1M376.5 181v1M377.5 180v1M378.5 179v1M379.5 178v1M380.5 177v1M381.5 176v1M382.5 175v1M383.5 174v1M384.5 173v1M385.5 172v1M386.5 171v1M387.5 170v1M388.5 169v1M389.5 168v1M390.5 167v1M391.5 166v1M392.5 165v1M393.5 164v1M394.5 163v1M395.5 162v1M396.5 161v1M397.5 160v1M398.5 158v2M399.5 157v1M400.5 156v1M401.5 155v1M402.5 154v1M403.5 153v1M404.5 152v1M405.5 151v1M406.5 150v1M407.5 149v1M408.5 148v1M409.5 147v1M410.5 146v1M411.5 145v1M412.5 144v1M413.5 143v1M413.5 143v3M414.5 146v5M415.5 151v5M416.5 156v6M417.5 162v5M418.5 167v5M419.5 172v5M420.5 177v5M421.5 182v5M422.5 187v5M423.5 192v6M424.5 198v5M425.5 203v5M426.5 208v5M427.5 213v5M428.5 218v5M429.5 223v6M430.5 229v5M431.5 234v5M432.5 239v5M433.5 244v5M434.5 249v5M435.5 254v5M436.5 259v6M437.5 265v5M438.5 270v5M439.5 275v5M440.5 280v5M441.5 285v5M442.5 290v6M443.5 296v5M444.5 301v5M445.5 306v5M446.5 311v5M447.5 316v5M448.5 321v5M449.5 326v6M450.5 332v5M451.5 337v5M452.5 342v5M453.5 347v5M454.5 352v5M455.5 357v6M456.5 363v5M457.5 368v5M458.5 373v5M459.5 378v5M460.5 383v5M461.5 388v5M462.5 393v6M463.5 399v5M464.5 404v5M465.5 409v3M465.5 410v2M466.5 406v4M467.5 402v4M468.5 398v4M469.5 394v4M470.5 390v4M471.5 386v4M472.5 382v4M473.5 378v4M474.5 374v4M475.5 370v4M476.5 366v4M477.5 362v4M478.5 358v4M479.5 354v4M480.5 350v4M481.5 346v4M482.5 342v4M483.5 338v4M484.5 334v4M485.5 331v3M486.5 327v4M487.5 323v4M488.5 319v4M489.5 315v4M490.5 311v4M491.5 307v4M492.5 303v4M493.5 299v4M494.5 295v4M495.5 291v4M496.5 287v4M497.5 283v4M498.5 279v4M499.5 275v4M500.5 271v4M501.5 267v4M502.5 263v4M503.5 259v4M504.5 255v4M505.5 252v3M506.5 248v4M507.5 244v4M508.5 240v4M509.5 236v4M510.5 232v4M511.5 228v4M512.5 224v4M513.5 220v4M514.5 216v4M515.5 212v4M516.5 208v4M517.5 204v4M518.5 200v4M519.5 196v4M520.5 192v4M521.5 188v4M522.5 184v4M523.5 180v4M524.5 176v4M525.5 174v2M525.5 174v6M526.5 180v10M527.5 190v10M528.5 200v10M529.5 210v10M530.5 220v10M531.5 230v11M532.5 241v10M533.5 251v10M534.5 261v10M535.5 271v10M536.5 281v10M537.5 291v6M537.5 296v1M538.5 294v2M539.5 293v1M540.5 292v1M541.5 290v2M542.5 289v1M543.5 288v1M544.5 286v2M545.5 285v1M546.5 284v1M547.5 282v2M548.5 281v1M549.5 280v1M550.5 278v2M551.5 277v1M552.5 275v2M553.5 274v1M554.5 273v1M555.5 271v2M556.5 270v1M557.5 269v1M558.5 267v2M559.5 266v1M560.5 265v1M561.5 263v2M562.5 262v1M563.5 261v1M564.5 259v2M565.5 258v1M566.5 256v2M567.5 255v1M568.5 254v1M569.5 252v2M570.5 251v1M571.5 250v1M572.5 248v2M573.5 247v1M574.5 246v1M575.5 244v2M576.5 243v1M577.5 242v1M578.5 240v2M579.5 239v1M580.5 237v2M581.5 236v1M582.5 235v1M583.5 233v2M584.5 232v1M585.5 231v1M586.5 229v2M587.5 228v1M588.5 227v1M589.5 225v2M590.5 224v1M591.5 223v1M592.5 221v2M593.5 220v1M593.5 220v2M594.5 222v3M595.5 225v4M596.5 229v3M597.5 232v3M598.5 235v4M599.5 239v3M600.5 242v3M601.5 245v4M602.5 249v3M603.5 252v3M604.5 255v4M605.5 259v3M606.5 262v3M607.5 265v4M608.5 269v3M609.5 272v3M610.5 275v4M611.5 279v3M612.5 282v3M613.5 285v4M614.5 289v3M615.5 292v3M616.5 295v3M617.5 298v4M618.5 302v3M619.5 305v3M620.5 308v4M621.5 312v3M622.5 315v3M623.5 318v4M624.5 322v3M625.5 325v3M626.5 328v4M627.5 332v3M628.5 335v3M629.5 338v4M630.5 342v3M631.5 345v3M632.5 348v4M633.5 352v3M634.5 355v3M635.5 358v4M636.5 362v3M637.5 365v2M637.5 366v1M638.5 364v2M639.5 363v1M640.5 362v1M641.5 360v2M642.5 359v1M643.5 357v2M644.5 356v1M645.5 355v1M646.5 353v2M647.5 352v1M648.5 350v2M649.5 349v1M650.5 348v1M651.5 346v2M652.5 345v1M653.5 343v2M654.5 342v1M655.5 341v1M656.5 339v2M657.5 338v1M658.5 336v2M659.5 335v1M660.5 334v1M661.5 332v2M662.5 331v1M663.5 329v2M664.5 328v1M665.5 327v1M666.5 325v2M667.5 324v1M668.5 322v2M669.5 321v1M670.5 320v1M671.5 318v2M672.5 317v1M673.5 315v2M674.5 314v1M675.5 313v1M676.5 311v2M677.5 310v1M678.5 308v2M679.5 307v1M680.5 306v1M681.5 304v2M682.5 303v1M683.5 301v2M684.5 300v1M685.5 299v1M686.5 297v2M687.5 296v1M688.5 294v2M689.5 293v1M690.5 292v1M691.5 290v2M692.5 289v1M693.5 287v2M694.5 286v1M695.5 285v1M696.5 283v2M697.5 282v1M697.5 282v5M698.5 287v9M699.5 296v8M700.5 304v9M701.5 313v9M702.5 322v9M703.5 331v8M704.5 339v9M705.5 348v9M706.5 357v9M707.5 366v8M708.5 374v9M709.5 383v9M710.5 392v9M711.5 401v8M712.5 409v9M713.5 418v9M714.5 427v9M715.5 436v8M716.5 444v9M717.5 453v9M718.5 462v9M719.5 471v8M720.5 479v9M721.5 488v5M721.5 492v1M722.5 490v2M723.5 489v1M724.5 487v2M725.5 486v1M726.5 485v1M727.5 483v2M728.5 482v1M729.5 480v2M730.5 479v1M731.5 477v2M732.5 476v1M733.5 474v2M734.5 473v1M735.5 472v1M736.5 470v2M737.5 469v1M738.5 467v2M739.5 466v1M740.5 464v2M741.5 463v1M742.5 462v1M743.5 460v2M744.5 459v1M745.5 457v2M746.5 456v1M747.5 454v2M748.5 453v1M749.5 451v2M750.5 450v1M751.5 449v1M752.5 447v2M753.5 446v1M754.5 444v2M755.5 443v1M756.5 441v2M757.5 440v1M758.5 439v1M759.5 437v2M760.5 436v1M761.5 434v2M762.5 433v1M763.5 431v2M764.5 430v1M765.5 428v2M766.5 427v1M767.5 426v1M768.5 424v2M769.5 423v1M770.5 421v2M771.5 420v1M772.5 418v2M773.5 417v1M774.5 415v2M775.5 414v1M776.5 413v1M777.5 411v2M778.5 410v1M779.5 408v2M780.5 407v1M781.5 405v2M782.5 404v1M783.5 402v2M784.5 401v1M785.5 400v1M786.5 398v2M787.5 397v1M788.5 395v2M789.5 394v1M790.5 392v2M791.5 391v1M792.5 390v1M793.5 388v2M794.5 387v1M795.5 385v2M796.5 384v1M797.5 382v2M798.5 381v1M799.5 379v2M800.5 378v1M801.5 377v1M802.5 375v2M803.5 374v1M804.5 372v2M805.5 371v1M806.5 369v2M807.5 368v1M808.5 367v1M809.5 365v2M810.5 364v1M811.5 362v2M812.5 361v1M813.5 359v2M814.5 358v1M815.5 356v2M816.5 355v1M817.5 354v1M818.5 352v2M819.5 351v1M820.5 349v2M821.5 348v1M821.5 348v4M822.5 352v7M823.5 359v7M824.5 366v7M825.5 373v7M826.5 380v7M827.5 387v7M828.5 394v7M829.5 401v7M830.5 408v7M831.5 415v6M832.5 421v7M833.5 428v7M834.5 435v7M835.5 442v7M836.5 449v7M837.5 456v7M838.5 463v7M839.5 470v7M840.5 477v7M841.5 484v4M841.5 487v1M842.5 486v1M843.5 485v1M844.5 484v1M845.5 483v1M846.5 481v2M847.5 480v1M848.5 479v1M849.5 478v1M850.5 477v1M851.5 476v1M852.5 475v1M853.5 474v1M854.5 473v1M855.5 471v2M856.5 470v1M857.5 469v1M858.5 468v1M859.5 467v1M860.5 466v1M861.5 465v1M862.5 464v1M863.5 463v1M864.5 462v1M865.5 460v2M866.5 459v1M867.5 458v1M868.5 457v1M869.5 456v1M870.5 455v1M871.5 454v1M872.5 453v1M873.5 452v1M874.5 451v1M875.5 449v2M876.5 448v1M877.5 447v1M878.5 446v1M879.5 445v1M880.5 444v1M881.5 443v1M882.5 442v1M883.5 441v1M884.5 439v2M885.5 438v1M886.5 437v1M887.5 436v1M888.5 435v1M889.5 434v1M889.5 434v3M890.5 437v4M891.5 441v4M892.5 445v4M893.5 449v4M894.5 453v4M895.5 457v5M896.5 462v4M897.5 466v4M898.5 470v4M899.5 474v4M900.5 478v4M901.5 482v5M902.5 487v4M903.5 491v4M904.5 495v4M905.5 499v4M906.5 503v4M907.5 507v4M908.5 511v5M909.5 516v4M910.5 520v4M911.5 524v4M912.5 528v4M913.5 532v4M914.5 536v5M915.5 541v4M916.5 545v4M917.5 549v4M918.5 553v4M919.5 557v4M920.5 561v5M921.5 566v4M922.5 570v4M923.5 574v4M924.5 578v4M925.5 582v4M926.5 586v5M927.5 591v4M928.5 595v4M929.5 599v4M930.5 603v4M931.5 607v4M932.5 611v4M933.5 615v5M934.5 620v4M935.5 624v4M936.5 628v4M937.5 632v4M938.5 636v4M939.5 640v5M940.5 645v4M941.5 649v4M942.5 653v4M943.5 657v4M944.5 661v4M945.5 665v3" stroke="#f00" stroke-width="1" fill="none"/>
<path d="M69.0 135.5L67.8 136.5L62.7 144.5L64.0 144.5L67.5 141.5L69.8 141.5L69.5 138.5L69.8 136.0zM101.0 137.5L99.8 138.5L94.7 146.5L96.0 146.5L99.5 143.5L101.8 143.5L101.5 140.5L101.8 138.0zM149.0 169.5L147.8 170.5L142.7 178.5L144.0 178.5L147.5 175.5L149.8 175.5L149.5 172.5L149.8 170.0zM21.0 222.5L19.8 223.5L14.7 231.5L16.0 231.5L19.5 228.5L21.8 228.5L21.5 225.5L21.8 223.0zM209.0 189.5L207.8 190.5L202.7 198.5L204.0 198.5L207.5 195.5L209.8 195.5L209.5 192.5L209.8 190.0zM265.0 123.5L263.8 124.5L258.7 132.5L260.0 132.5L263.5 129.5L265.8 129.5L265.5 126.5L265.8 124.0zM285.0 139.5L283.8 140.5L278.7 148.5L280.0 148.5L283.5 145.5L285.8 145.5L285.5 142.5L285.8 140.0zM305.0 146.5L303.8 147.5L298.7 155.5L300.0 155.5L303.5 152.5L305.8 152.5L305.5 149.5L305.8 147.0zM317.0 146.5L315.8 147.5L310.7 155.5L312.0 155.5L315.5 152.5L317.8 152.5L317.5 149.5L317.8 147.0zM349.0 155.5L347.8 156.5L342.7 164.5L344.0 164.5L347.5 161.5L349.8 161.5L349.5 158.5L349.8 156.0zM377.0 153.5L375.8 154.5L370.7 162.5L372.0 162.5L375.5 159.5L377.8 159.5L377.5 156.5L377.8 154.0zM393.0 152.5L391.8 153.5L386.7 161.5L388.0 161.5L391.5 158.5L393.8 158.5L393.5 155.5L393.8 153.0zM413.0 128.5L411.8 129.5L406.7 137.5L408.0 137.5L411.5 134.5L413.8 134.5L413.5 131.5L413.8 129.0zM449.0 182.5L447.8 183.5L442.7 191.5L444.0 191.5L447.5 188.5L449.8 188.5L449.5 185.5L449.8 183.0zM465.0 173.5L463.8 174.5L458.7 182.5L460.0 182.5L463.5 179.5L465.8 179.5L465.5 176.5L465.8 174.0zM477.0 192.5L475.8 193.5L470.7 201.5L472.0 201.5L475.5 198.5L477.8 198.5L477.5 195.5L477.8 193.0zM525.0 160.5L523.8 161.5L518.7 169.5L520.0 169.5L523.5 166.5L525.8 166.5L525.5 163.5L525.8 161.0zM577.0 216.5L575.8 217.5L570.7 225.5L572.0 225.5L575.5 222.5L577.8 222.5L577.5 219.5L577.8 217.0zM593.0 205.5L591.8 206.5L586.7 214.5L588.0 214.5L591.5 211.5L593.8 211.5L593.5 208.5L593.8 206.0zM553.0 235.5L551.8 236.5L546.7 244.5L548.0 244.5L551.5 241.5L553.8 241.5L553.5 238.5L553.8 236.0zM633.0 277.5L631.8 278.5L626.7 286.5L628.0 286.5L631.5 283.5L633.8 283.5L633.5 280.5L633.8 278.0zM661.0 283.5L659.8 284.5L654.7 292.5L656.0 292.5L659.5 289.5L661.8 289.5L661.5 286.5L661.8 284.0zM673.0 283.5L671.8 284.5L666.7 292.5L668.0 292.5L671.5 289.5L673.8 289.5L673.5 286.5L673.8 284.0zM697.0 268.5L695.8 269.5L690.7 277.5L692.0 277.5L695.5 274.5L697.8 274.5L697.5 271.5L697.8 269.0zM725.0 343.5L723.8 344.5L718.7 352.5L720.0 352.5L723.5 349.5L725.8 349.5L725.5 346.5L725.8 344.0zM757.0 379.5L755.8 380.5L750.7 388.5L752.0 388.5L755.5 385.5L757.8 385.5L757.5 382.5L757.8 380.0zM797.0 376.5L795.8 377.5L790.7 385.5L792.0 385.5L795.5 382.5L797.8 382.5L797.5 379.5L797.8 377.0zM781.0 412.5L779.8 413.5L774.7 421.5L776.0 421.5L779.5 418.5L781.8 418.5L781.5 415.5L781.8 413.0zM821.0 333.5L819.8 334.5L814.7 342.5L816.0 342.5L819.5 339.5L821.8 339.5L821.5 336.5L821.8 334.0zM889.0 420.5L887.8 421.5L882.7 429.5L884.0 429.5L887.5 426.5L889.8 426.5L889.5 423.5L889.8 421.0zM865.0 436.5L863.8 437.5L858.7 445.5L860.0 445.5L863.5 442.5L865.8 442.5L865.5 439.5L865.8 437.0zM917.0 468.5L915.8 469.5L910.7 477.5L912.0 477.5L915.5 474.5L917.8 474.5L917.5 471.5L917.8 469.0zM945.0 512.5L943.8 513.5L938.7 521.5L940.0 521.5L943.5 518.5L945.8 518.5L945.5 515.5L945.8 513.0zM969.0 532.5L967.8 533.5L962.7 541.5L964.0 541.5L967.5 538.5L969.8 538.5L969.5 535.5L969.8 533.0zM13.0 273.5L14.2 272.5L19.3 264.5L18.0 264.5L14.5 267.5L12.2 267.5L12.5 270.5L12.2 273.0zM29.0 301.5L30.2 300.5L35.3 292.5L34.0 292.5L30.5 295.5L28.2 295.5L28.5 298.5L28.2 301.0zM57.0 257.5L58.2 256.5L63.3 248.5L62.0 248.5L58.5 251.5L56.2 251.5L56.5 254.5L56.2 257.0zM93.0 197.5L94.2 196.5L99.3 188.5L98.0 188.5L94.5 191.5L92.2 191.5L92.5 194.5L92.2 197.0zM129.0 243.5L130.2 242.5L135.3 234.5L134.0 234.5L130.5 237.5L128.2 237.5L128.5 240.5L128.2 243.0zM169.0 286.5L170.2 285.5L175.3 277.5L174.0 277.5L170.5 280.5L168.2 280.5L168.5 283.5L168.2 286.0zM181.0 297.5L182.2 296.5L187.3 288.5L186.0 288.5L182.5 291.5L180.2 291.5L180.5 294.5L180.2 297.0zM233.0 284.5L234.2 283.5L239.3 275.5L238.0 275.5L234.5 278.5L232.2 278.5L232.5 281.5L232.2 284.0zM277.0 207.5L278.2 206.5L283.3 198.5L282.0 198.5L278.5 201.5L276.2 201.5L276.5 204.5L276.2 207.0zM297.0 195.5L298.2 194.5L303.3 186.5L302.0 186.5L298.5 189.5L296.2 189.5L296.5 192.5L296.2 195.0zM321.0 250.5L322.2 249.5L327.3 241.5L326.0 241.5L322.5 244.5L320.2 244.5L320.5 247.5L320.2 250.0zM345.0 222.5L346.2 221.5L351.3 213.5L350.0 213.5L346.5 216.5L344.2 216.5L344.5 219.5L344.2 222.0zM369.0 227.5L370.2 226.5L375.3 218.5L374.0 218.5L370.5 221.5L368.2 221.5L368.5 224.5L368.2 227.0zM385.0 209.5L386.2 208.5L391.3 200.5L390.0 200.5L386.5 203.5L384.2 203.5L384.5 206.5L384.2 209.0zM405.0 205.5L406.2 204.5L411.3 196.5L410.0 196.5L406.5 199.5L404.2 199.5L404.5 202.5L404.2 205.0zM429.0 319.5L430.2 318.5L435.3 310.5L434.0 310.5L430.5 313.5L428.2 313.5L428.5 316.5L428.2 319.0zM465.0 425.5L466.2 424.5L471.3 416.5L470.0 416.5L466.5 419.5L464.2 419.5L464.5 422.5L464.2 425.0zM537.0 307.5L538.2 306.5L543.3 298.5L542.0 298.5L538.5 301.5L536.2 301.5L536.5 304.5L536.2 307.0zM497.0 255.5L498.2 254.5L503.3 246.5L502.0 246.5L498.5 249.5L496.2 249.5L496.5 252.5L496.2 255.0zM509.0 258.5L510.2 257.5L515.3 249.5L514.0 249.5L510.5 252.5L508.2 252.5L508.5 255.5L508.2 258.0zM621.0 370.5L622.2 369.5L627.3 361.5L626.0 361.5L622.5 364.5L620.2 364.5L620.5 367.5L620.2 370.0zM637.0 380.5L638.2 379.5L643.3 371.5L642.0 371.5L638.5 374.5L636.2 374.5L636.5 377.5L636.2 380.0zM661.0 356.5L662.2 355.5L667.3 347.5L666.0 347.5L662.5 350.5L660.2 350.5L660.5 353.5L660.2 356.0zM693.0 323.5L694.2 322.5L699.3 314.5L698.0 314.5L694.5 317.5L692.2 317.5L692.5 320.5L692.2 323.0zM721.0 505.5L722.2 504.5L727.3 496.5L726.0 496.5L722.5 499.5L720.2 499.5L720.5 502.5L720.2 505.0zM745.0 466.5L746.2 465.5L751.3 457.5L750.0 457.5L746.5 460.5L744.2 460.5L744.5 463.5L744.2 466.0zM761.0 467.5L762.2 466.5L767.3 458.5L766.0 458.5L762.5 461.5L760.2 461.5L760.5 464.5L760.2 467.0zM789.0 489.5L790.2 488.5L795.3 480.5L794.0 480.5L790.5 483.5L788.2 483.5L788.5 486.5L788.2 489.0zM817.0 487.5L818.2 486.5L823.3 478.5L822.0 478.5L818.5 481.5L816.2 481.5L816.5 484.5L816.2 487.0zM841.0 500.5L842.2 499.5L847.3 491.5L846.0 491.5L842.5 494.5L840.2 494.5L840.5 497.5L840.2 500.0zM853.0 496.5L854.2 495.5L859.3 487.5L858.0 487.5L854.5 490.5L852.2 490.5L852.5 493.5L852.2 496.0zM869.0 487.5L870.2 486.5L875.3 478.5L874.0 478.5L870.5 481.5L868.2 481.5L868.5 484.5L868.2 487.0zM881.0 482.5L882.2 481.5L887.3 473.5L886.0 473.5L882.5 476.5L880.2 476.5L880.5 479.5L880.2 482.0zM897.0 551.5L898.2 550.5L903.3 542.5L902.0 542.5L898.5 545.5L896.2 545.5L896.5 548.5L896.2 551.0zM913.0 642.5L914.2 641.5L919.3 633.5L918.0 633.5L914.5 636.5L912.2 636.5L912.5 639.5L912.2 642.0zM945.0 680.5L946.2 679.5L951.3 671.5L950.0 671.5L946.5 674.5L944.2 674.5L944.5 677.5L944.2 680.0zM961.0 604.5L962.2 603.5L967.3 595.5L966.0 595.5L962.5 598.5L960.2 598.5L960.5 601.5L960.2 604.0z" fill="#f00"/>
<path d="M69.5 136.5L75.0 144.5M69.5 141.5L74.0 144.0M101.5 138.5L107.0 146.5M101.5 143.5L106.0 146.0M149.5 170.5L155.0 178.5M149.5 175.5L154.0 178.0M21.5 223.5L27.0 231.5M21.5 228.5L26.0 231.0M209.5 190.5L215.0 198.5M209.5 195.5L214.0 198.0M265.5 124.5L271.0 132.5M265.5 129.5L270.0 132.0M285.5 140.5L291.0 148.5M285.5 145.5L290.0 148.0M305.5 147.5L311.0 155.5M305.5 152.5L310.0 155.0M317.5 147.5L323.0 155.5M317.5 152.5L322.0 155.0M349.5 156.5L355.0 164.5M349.5 161.5L354.0 164.0M377.5 154.5L383.0 162.5M377.5 159.5L382.0 162.0M393.5 153.5L399.0 161.5M393.5 158.5L398.0 161.0M413.5 129.5L419.0 137.5M413.5 134.5L418.0 137.0M449.5 183.5L455.0 191.5M449.5 188.5L454.0 191.0M465.5 174.5L471.0 182.5M465.5 179.5L470.0 182.0M477.5 193.5L483.0 201.5M477.5 198.5L482.0 201.0M525.5 161.5L531.0 169.5M525.5 166.5L530.0 169.0M577.5 217.5L583.0 225.5M577.5 222.5L582.0 225.0M593.5 206.5L599.0 214.5M593.5 211.5L598.0 214.0M553.5 236.5L559.0 244.5M553.5 241.5L558.0 244.0M633.5 278.5L639.0 286.5M633.5 283.5L638.0 286.0M661.5 284.5L667.0 292.5M661.5 289.5L666.0 292.0M673.5 284.5L679.0 292.5M673.5 289.5L678.0 292.0M697.5 269.5L703.0 277.5M697.5 274.5L702.0 277.0M725.5 344.5L731.0 352.5M725.5 349.5L730.0 352.0M757.5 380.5L763.0 388.5M757.5 385.5L762.0 388.0M797.5 377.5L803.0 385.5M797.5 382.5L802.0 385.0M781.5 413.5L787.0 421.5M781.5 418.5L786.0 421.0M821.5 334.5L827.0 342.5M821.5 339.5L826.0 342.0M889.5 421.5L895.0 429.5M889.5 426.5L894.0 429.0M865.5 437.5L871.0 445.5M865.5 442.5L870.0 445.0M917.5 469.5L923.0 477.5M917.5 474.5L922.0 477.0M945.5 513.5L951.0 521.5M945.5 518.5L950.0 521.0M969.5 533.5L975.0 541.5M969.5 538.5L974.0 541.0M12.5 272.5L7.0 264.5M12.5 267.5L8.0 265.0M28.5 300.5L23.0 292.5M28.5 295.5L24.0 293.0M56.5 256.5L51.0 248.5M56.5 251.5L52.0 249.0M92.5 196.5L87.0 188.5M92.5 191.5L88.0 189.0M128.5 242.5L123.0 234.5M128.5 237.5L124.0 235.0M168.5 285.5L163.0 277.5M168.5 280.5L164.0 278.0M180.5 296.5L175.0 288.5M180.5 291.5L176.0 289.0M232.5 283.5L227.0 275.5M232.5 278.5L228.0 276.0M276.5 206.5L271.0 198.5M276.5 201.5L272.0 199.0M296.5 194.5L291.0 186.5M296.5 189.5L292.0 187.0M320.5 249.5L315.0 241.5M320.5 244.5L316.0 242.0M344.5 221.5L339.0 213.5M344.5 216.5L340.0 214.0M368.5 226.5L363.0 218.5M368.5 221.5L364.0 219.0M384.5 208.5L379.0 200.5M384.5 203.5L380.0 201.0M404.5 204.5L399.0 196.5M404.5 199.5L400.0 197.0M428.5 318.5L423.0 310.5M428.5 313.5L424.0 311.0M464.5 424.5L459.0 416.5M464.5 419.5L460.0 417.0M536.5 306.5L531.0 298.5M536.5 301.5L532.0 299.0M496.5 254.5L491.0 246.5M496.5 249.5L492.0 247.0M508.5 257.5L503.0 249.5M508.5 252.5L504.0 250.0M620.5 369.5L615.0 361.5M620.5 364.5L616.0 362.0M636.5 379.5L631.0 371.5M636.5 374.5L632.0 372.0M660.5 355.5L655.0 347.5M660.5 350.5L656.0 348.0M692.5 322.5L687.0 314.5M692.5 317.5L688.0 315.0M720.5 504.5L715.0 496.5M720.5 499.5L716.0 497.0M744.5 465.5L739.0 457.5M744.5 460.5L740.0 458.0M760.5 466.5L755.0 458.5M760.5 461.5L756.0 459.0M788.5 488.5L783.0 480.5M788.5 483.5L784.0 481.0M816.5 486.5L811.0 478.5M816.5 481.5L812.0 479.0M840.5 499.5L835.0 491.5M840.5 494.5L836.0 492.0M852.5 495.5L847.0 487.5M852.5 490.5L848.0 488.0M868.5 486.5L863.0 478.5M868.5 481.5L864.0 479.0M880.5 481.5L875.0 473.5M880.5 476.5L876.0 474.0M896.5 550.5L891.0 542.5M896.5 545.5L892.0 543.0M912.5 641.5L907.0 633.5M912.5 636.5L908.0 634.0M944.5 679.5L939.0 671.5M944.5 674.5L940.0 672.0M960.5 603.5L955.0 595.5M960.5 598.5L956.0 596.0" stroke="#f00" fill="none"/>
<path d="M9.5 241V261M13.5 243V261M17.5 239V257M21.5 238V256M25.5 245V284M29.5 264V288M33.5 246V279M37.5 249V271M41.5 227V263M45.5 227V247M49.5 222V241M53.5 221V238M57.5 208V246M61.5 177V216M65.5 157V190M69.5 150V170M73.5 151V172M77.5 163V179M81.5 161V179M85.5 163V185M89.5 164V181M93.5 164V184M97.5 162V180M101.5 151V171M105.5 152V163M109.5 154V177M113.5 162V177M117.5 160V178M121.5 172V199M125.5 184V226M129.5 214V232M133.5 197V221M137.5 198V221M141.5 195V219M145.5 197V227M149.5 184V216M153.5 195V234M157.5 216V255M161.5 222V255M165.5 226V262M169.5 251V274M173.5 253V271M177.5 247V273M181.5 245V285M185.5 250V258M189.5 234V257M193.5 231V245M197.5 226V240M201.5 209V238M205.5 208V227M209.5 204V215M213.5 208V229M217.5 214V237M221.5 219V253M225.5 214V252M229.5 243V265M233.5 251V271M237.5 250V269M241.5 226V264M245.5 192V237M249.5 150V203M253.5 145V162M257.5 144V178M261.5 142V177M265.5 138V172M269.5 166V179M273.5 169V186M277.5 168V196M281.5 156V181M285.5 154V173M289.5 167V180M293.5 169V183M297.5 170V184M301.5 167V181M305.5 160V177M309.5 162V179M313.5 169V189M317.5 161V229M321.5 213V238M325.5 217V234M329.5 217V232M333.5 179V225M337.5 178V197M341.5 177V196M345.5 172V210M349.5 169V186M353.5 172V193M357.5 190V204M361.5 183V204M365.5 183V198M369.5 190V214M373.5 184V213M377.5 167V190M381.5 167V179M385.5 170V197M389.5 174V190M393.5 166V183M397.5 166V178M401.5 168V185M405.5 175V192M409.5 169V191M413.5 143V180M417.5 150V190M421.5 178V232M425.5 226V268M429.5 251V307M433.5 277V301M437.5 277V301M441.5 249V296M445.5 235V265M449.5 196V240M453.5 201V226M457.5 208V228M461.5 204V226M465.5 187V411M469.5 211V264M473.5 208V238M477.5 208V231M481.5 209V232M485.5 220V237M489.5 231V240M497.5 224V243M501.5 228V238M505.5 209V235M509.5 215V246M513.5 208V240M517.5 179V220M521.5 175V209M525.5 174V194M529.5 180V238M533.5 222V263M537.5 220V295M541.5 255V280M545.5 256V275M549.5 252V270M553.5 250V271M557.5 257V271M561.5 256V264M565.5 243V268M569.5 238V257M573.5 237V257M577.5 231V252M581.5 229V247M585.5 241V252M589.5 227V246M593.5 220V234M597.5 227V241M601.5 234V256M605.5 241V264M609.5 254V296M613.5 279V320M617.5 300V337M621.5 319V357M625.5 303V347M629.5 295V327M633.5 291V330M637.5 297V366M641.5 323V360M645.5 318V342M649.5 300V338M653.5 298V318M657.5 302V343M661.5 295V345M665.5 306V333M669.5 307V326M673.5 297V318M677.5 297V312M681.5 297V313M685.5 296V308M689.5 294V307M693.5 284V312M701.5 284V308M705.5 295V332M709.5 312V357M713.5 341V436M717.5 395V450M721.5 397V492M725.5 358V402M729.5 366V401M733.5 368V402M737.5 399V449M741.5 411V453M745.5 403V454M749.5 413V436M753.5 408V435M757.5 385V425M761.5 419V455M765.5 426V445M769.5 427V450M773.5 433V449M777.5 437V451M781.5 426V466M785.5 450V471M789.5 444V477M793.5 411V457M797.5 391V425M801.5 397V423M805.5 403V429M809.5 424V451M813.5 420V451M817.5 359V474M821.5 348V412M825.5 348V433M829.5 405V450M833.5 412V450M837.5 431V452M841.5 434V487M845.5 446V487M849.5 454V472M853.5 454V483M857.5 454V466M861.5 453V471M865.5 452V467M869.5 457V473M873.5 460V472M877.5 452V464M881.5 453V469M885.5 446V466M889.5 434V450M893.5 437V483M897.5 473V539M901.5 490V513M905.5 488V511M909.5 495V557M913.5 496V629M917.5 483V546M921.5 504V547M925.5 497V568M929.5 527V570M933.5 557V605M937.5 577V602M941.5 555V629M945.5 526V667M949.5 554V609M953.5 552V590M957.5 558V579M961.5 551V592M965.5 549V566M969.5 545V563M973.5 556V572M977.5 568V583M981.5 572V599M985.5 554V580" stroke="#000" fill="none"/>
<path d="M16 245h3v6h-3zM20 250h3v3h-3zM24 251h3v25h-3zM36 255h3v6h-3zM44 228h3v6h-3zM48 231h3v4h-3zM52 231h3v3h-3zM68 159h3v5h-3zM72 162h3v8h-3zM76 169h3v1h-3zM80 168h3v9h-3zM84 174h3v6h-3zM92 168h3v7h-3zM108 156h3v16h-3zM116 169h3v5h-3zM120 174h3v16h-3zM124 190h3v35h-3zM136 199h3v20h-3zM148 208h3v5h-3zM152 210h3v18h-3zM156 228h3v11h-3zM160 238h3v9h-3zM164 250h3v5h-3zM168 255h3v16h-3zM176 259h3v12h-3zM184 255h3v1h-3zM208 208h3v6h-3zM212 215h3v10h-3zM220 220h3v20h-3zM224 239h3v5h-3zM228 244h3v14h-3zM232 257h3v8h-3zM256 148h3v27h-3zM264 146h3v24h-3zM268 170h3v7h-3zM272 177h3v3h-3zM284 156h3v16h-3zM288 170h3v4h-3zM292 174h3v7h-3zM308 164h3v11h-3zM312 177h3v6h-3zM316 183h3v43h-3zM320 225h3v1h-3zM324 223h3v4h-3zM336 187h3v6h-3zM340 192h3v1h-3zM348 175h3v3h-3zM352 178h3v14h-3zM356 191h3v12h-3zM364 185h3v12h-3zM368 197h3v5h-3zM380 172h3v5h-3zM384 177h3v8h-3zM396 168h3v9h-3zM400 177h3v6h-3zM416 152h3v32h-3zM420 184h3v44h-3zM424 227h3v35h-3zM428 256h3v34h-3zM436 290h3v4h-3zM452 209h3v4h-3zM456 213h3v1h-3zM464 210h3v19h-3zM480 214h3v9h-3zM484 222h3v13h-3zM500 231h3v2h-3zM508 226h3v6h-3zM524 185h3v5h-3zM528 190h3v36h-3zM532 226h3v36h-3zM536 262h3v15h-3zM552 261h3v9h-3zM560 261h3v1h-3zM580 231h3v14h-3zM592 228h3v4h-3zM596 232h3v3h-3zM600 235h3v12h-3zM604 246h3v16h-3zM608 260h3v25h-3zM612 285h3v24h-3zM616 308h3v13h-3zM620 320h3v22h-3zM632 298h3v1h-3zM636 298h3v40h-3zM652 301h3v6h-3zM656 303h3v39h-3zM664 310h3v16h-3zM676 301h3v5h-3zM684 300h3v1h-3zM688 300h3v4h-3zM700 290h3v10h-3zM704 298h3v23h-3zM708 320h3v36h-3zM712 356h3v58h-3zM732 370h3v31h-3zM736 400h3v15h-3zM740 413h3v37h-3zM748 419h3v14h-3zM756 421h3v1h-3zM760 421h3v22h-3zM768 437h3v1h-3zM772 436h3v6h-3zM776 441h3v7h-3zM780 447h3v10h-3zM800 407h3v1h-3zM804 406h3v21h-3zM808 426h3v19h-3zM824 365h3v53h-3zM828 417h3v2h-3zM832 418h3v31h-3zM836 448h3v2h-3zM840 450h3v33h-3zM848 469h3v2h-3zM860 457h3v7h-3zM864 463h3v1h-3zM868 463h3v4h-3zM880 457h3v7h-3zM892 443h3v33h-3zM896 475h3v34h-3zM908 496h3v42h-3zM920 519h3v1h-3zM924 516h3v21h-3zM928 537h3v32h-3zM932 568h3v16h-3zM936 584h3v13h-3zM944 556h3v40h-3zM948 583h3v2h-3zM956 564h3v6h-3zM968 551h3v10h-3zM972 561h3v8h-3zM976 569h3v9h-3z" fill="#000"/>
<path d="M8.5 249.5h2v2h-2zM12.5 245.5h2v1h-2zM28.5 270.5h2v6h-2zM32.5 255.5h2v14h-2zM40.5 229.5h2v32h-2zM56.5 209.5h2v22h-2zM60.5 186.5h2v22h-2zM64.5 160.5h2v26h-2zM88.5 169.5h2v10h-2zM96.5 165.5h2v11h-2zM100.5 159.5h2v5h-2zM104.5 156.5h2v3h-2zM112.5 169.5h2v2h-2zM128.5 220.5h2v4h-2zM132.5 198.5h2v21h-2zM140.5 211.5h2v5h-2zM144.5 208.5h2v1h-2zM172.5 259.5h2v10h-2zM180.5 255.5h2v15h-2zM188.5 241.5h2v14h-2zM192.5 233.5h2v7h-2zM196.5 228.5h2v5h-2zM200.5 223.5h2v5h-2zM204.5 210.5h2v12h-2zM216.5 219.5h2v6h-2zM236.5 251.5h2v12h-2zM240.5 229.5h2v21h-2zM244.5 201.5h2v33h-2zM248.5 157.5h2v43h-2zM252.5 146.5h2v11h-2zM260.5 148.5h2v26h-2zM276.5 179.5h2v1h-2zM280.5 156.5h2v23h-2zM296.5 174.5h2v6h-2zM300.5 168.5h2v4h-2zM304.5 166.5h2v2h-2zM328.5 223.5h2v3h-2zM332.5 187.5h2v35h-2zM344.5 174.5h2v17h-2zM360.5 185.5h2v17h-2zM372.5 185.5h2v15h-2zM376.5 173.5h2v10h-2zM388.5 181.5h2v3h-2zM392.5 169.5h2v11h-2zM404.5 179.5h2v3h-2zM408.5 170.5h2v9h-2zM412.5 154.5h2v15h-2zM432.5 290.5h2v1h-2zM440.5 262.5h2v31h-2zM444.5 238.5h2v25h-2zM448.5 208.5h2v30h-2zM460.5 209.5h2v3h-2zM468.5 227.5h2v25h-2zM472.5 216.5h2v11h-2zM476.5 214.5h2v1h-2zM488.5 232.5h2v2h-2zM496.5 231.5h2v1h-2zM504.5 226.5h2v6h-2zM512.5 219.5h2v12h-2zM516.5 204.5h2v14h-2zM520.5 185.5h2v22h-2zM540.5 271.5h2v5h-2zM544.5 269.5h2v2h-2zM548.5 261.5h2v7h-2zM556.5 261.5h2v8h-2zM564.5 249.5h2v12h-2zM568.5 248.5h2v1h-2zM572.5 245.5h2v3h-2zM576.5 231.5h2v13h-2zM584.5 243.5h2v1h-2zM588.5 228.5h2v15h-2zM624.5 306.5h2v34h-2zM628.5 297.5h2v8h-2zM640.5 325.5h2v12h-2zM644.5 320.5h2v4h-2zM648.5 301.5h2v18h-2zM660.5 310.5h2v32h-2zM668.5 310.5h2v14h-2zM672.5 301.5h2v8h-2zM680.5 298.5h2v6h-2zM692.5 290.5h2v12h-2zM716.5 413.5h2v24h-2zM720.5 400.5h2v37h-2zM724.5 385.5h2v14h-2zM728.5 372.5h2v10h-2zM744.5 418.5h2v31h-2zM752.5 423.5h2v9h-2zM764.5 436.5h2v6h-2zM784.5 452.5h2v4h-2zM788.5 447.5h2v4h-2zM792.5 421.5h2v26h-2zM796.5 407.5h2v15h-2zM812.5 435.5h2v8h-2zM816.5 366.5h2v68h-2zM820.5 364.5h2v2h-2zM844.5 470.5h2v10h-2zM852.5 460.5h2v10h-2zM856.5 457.5h2v2h-2zM872.5 463.5h2v3h-2zM876.5 458.5h2v3h-2zM884.5 447.5h2v16h-2zM888.5 443.5h2v4h-2zM900.5 496.5h2v12h-2zM904.5 496.5h2v2h-2zM912.5 521.5h2v17h-2zM916.5 518.5h2v4h-2zM940.5 556.5h2v40h-2zM952.5 564.5h2v21h-2zM960.5 552.5h2v17h-2zM964.5 551.5h2v2h-2zM980.5 576.5h2v1h-2zM984.5 563.5h2v12h-2z" fill="#fff" stroke="#000"/>
<path d="M493.5 231V239M697.5 282V300" stroke="#0c0" fill="none"/>
</g>
<path d="M8.5 109V683.5H1239.5V109.5H8" stroke="#000" fill="none"/>
<path d="M987 110h9v1h-1v1h-1v1h-1v1h-1v1h-1v-1h-1v-1h-1v-1h-1v-1h-1z" fill="#778899"/>
<path d="M1240 113.5h2M1240 146.5h2M1240 179.5h2M1240 213.5h2M1240 246.5h2M1240 280.5h2M1240 313.5h2M1240 346.5h2M1240 380.5h2M1240 413.5h2M1240 447.5h2M1240 480.5h2M1240 513.5h2M1240 547.5h2M1240 580.5h2M1240 614.5h2M1240 647.5h2M1240 680.5h2" stroke="#000" fill="none"/>
<g font-family="Liberation Sans, sans-serif" font-size="9.700" fill="#000" shape-rendering="auto">
<text x="1246" y="116" textLength="31.500" lengthAdjust="spacingAndGlyphs">1.23385</text>
<text x="1246" y="149" textLength="31.500" lengthAdjust="spacingAndGlyphs">1.23305</text>
<text x="1246" y="182" textLength="31.500" lengthAdjust="spacingAndGlyphs">1.23225</text>
<text x="1246" y="216" textLength="31.500" lengthAdjust="spacingAndGlyphs">1.23145</text>
<text x="1246" y="249" textLength="31.500" lengthAdjust="spacingAndGlyphs">1.23065</text>
<text x="1246" y="283" textLength="31.500" lengthAdjust="spacingAndGlyphs">1.22985</text>
<text x="1246" y="316" textLength="31.500" lengthAdjust="spacingAndGlyphs">1.22905</text>
<text x="1246" y="349" textLength="31.500" lengthAdjust="spacingAndGlyphs">1.22825</text>
<text x="1246" y="383" textLength="31.500" lengthAdjust="spacingAndGlyphs">1.22745</text>
<text x="1246" y="416" textLength="31.500" lengthAdjust="spacingAndGlyphs">1.22665</text>
<text x="1246" y="450" textLength="31.500" lengthAdjust="spacingAndGlyphs">1.22585</text>
<text x="1246" y="483" textLength="31.500" lengthAdjust="spacingAndGlyphs">1.22505</text>
<text x="1246" y="516" textLength="31.500" lengthAdjust="spacingAndGlyphs">1.22425</text>
<text x="1246" y="550" textLength="31.500" lengthAdjust="spacingAndGlyphs">1.22345</text>
<text x="1246" y="583" textLength="31.500" lengthAdjust="spacingAndGlyphs">1.22265</text>
<text x="1246" y="617" textLength="31.500" lengthAdjust="spacingAndGlyphs">1.22185</text>
<text x="1246" y="650" textLength="31.500" lengthAdjust="spacingAndGlyphs">1.22105</text>
<text x="1246" y="683" textLength="31.500" lengthAdjust="spacingAndGlyphs">1.22025</text>
</g>
<rect x="1242" y="556" width="39" height="11" fill="#000"/><rect x="1242" y="613" width="39" height="11" fill="#0000cd"/>
<g font-family="Liberation Sans, sans-serif" font-size="9.700" fill="#fff"><text x="1246" y="565" textLength="31.500" lengthAdjust="spacingAndGlyphs">1.22308</text><text x="1246" y="622" textLength="31.500" lengthAdjust="spacingAndGlyphs">1.22171</text></g>
<path d="M9.5 684v3M73.5 684v3M137.5 684v3M201.5 684v3M265.5 684v3M329.5 684v3M393.5 684v3M457.5 684v3M521.5 684v3M585.5 684v3M649.5 684v3M713.5 684v3M777.5 684v3M841.5 684v3M905.5 684v3M969.5 684v3" stroke="#000" fill="none"/>
<g font-family="Liberation Sans, sans-serif" font-size="9.700" fill="#000">
<text x="7.7" y="696" textLength="52.9" lengthAdjust="spacingAndGlyphs">25 Nov 2013</text>
<text x="71.7" y="696" textLength="55.5" lengthAdjust="spacingAndGlyphs">25 Nov 21:00</text>
<text x="135.7" y="696" textLength="55.5" lengthAdjust="spacingAndGlyphs">26 Nov 13:00</text>
<text x="199.7" y="696" textLength="55.5" lengthAdjust="spacingAndGlyphs">27 Nov 05:00</text>
<text x="263.7" y="696" textLength="55.5" lengthAdjust="spacingAndGlyphs">27 Nov 21:00</text>
<text x="327.7" y="696" textLength="55.5" lengthAdjust="spacingAndGlyphs">28 Nov 13:00</text>
<text x="391.7" y="696" textLength="55.5" lengthAdjust="spacingAndGlyphs">29 Nov 05:00</text>
<text x="455.7" y="696" textLength="55.5" lengthAdjust="spacingAndGlyphs">29 Nov 21:00</text>
<text x="519.7" y="696" textLength="50.5" lengthAdjust="spacingAndGlyphs">2 Dec 13:00</text>
<text x="583.7" y="696" textLength="50.5" lengthAdjust="spacingAndGlyphs">3 Dec 05:00</text>
<text x="647.7" y="696" textLength="50.5" lengthAdjust="spacingAndGlyphs">3 Dec 21:00</text>
<text x="711.7" y="696" textLength="50.5" lengthAdjust="spacingAndGlyphs">4 Dec 13:00</text>
<text x="775.7" y="696" textLength="50.5" lengthAdjust="spacingAndGlyphs">5 Dec 05:00</text>
<text x="839.7" y="696" textLength="50.5" lengthAdjust="spacingAndGlyphs">5 Dec 21:00</text>
<text x="903.7" y="696" textLength="50.5" lengthAdjust="spacingAndGlyphs">6 Dec 13:00</text>
<text x="967.7" y="696" textLength="50.5" lengthAdjust="spacingAndGlyphs">9 Dec 05:00</text>
</g>
<rect x="22" y="112" width="205" height="12" fill="#fff"/>
<path d="M13 115h8l-4 4z" fill="#000"/>
<g font-family="Liberation Sans, sans-serif" font-size="9.700" fill="#000"><text x="23.600" y="121" textLength="200.800" lengthAdjust="spacingAndGlyphs">EURCHF,H1&#160; 1.22276 1.22330 1.22265 1.22308</text>
<rect x="9" y="484" width="55" height="11" fill="#fff"/><rect x="9" y="541" width="84" height="11" fill="#fff"/><text x="15.200" y="493" textLength="47" lengthAdjust="spacingAndGlyphs">#868159 tp</text><text x="15.200" y="550" textLength="76.100" lengthAdjust="spacingAndGlyphs">#868159 buy 0.20</text></g>
</svg><div class="a" style="left:4px;top:703px;width:1279px;height:1px;background:#000"></div>
<div class="a" style="left:6px;top:704px;width:1276px;height:19px;background:#e2e2e2"></div>
<div class="a" style="left:4px;top:704px;width:1px;height:19px;background:#a0a0a0"></div><div class="a" style="left:5px;top:704px;width:1px;height:19px;background:#6e6c60"></div>
<div class="a" style="left:4px;top:723px;width:1280px;height:1px;background:#f4f4f4"></div>
<div class="t" style="left:18.4px;top:706.5px;font-size:11px;color:#6c6a5e;transform:scaleX(0.8918);transform-origin:0 0;">EURUSD,H1</div>
<div class="t" style="left:98.5px;top:706.5px;font-size:11px;color:#6c6a5e;transform:scaleX(0.9201);transform-origin:0 0;">USDCHF,H4</div>
<div class="t" style="left:179.6px;top:706.5px;font-size:11px;color:#6c6a5e;transform:scaleX(0.8667);transform-origin:0 0;">GBPUSD,H1</div>
<div class="t" style="left:258.8px;top:706.5px;font-size:11px;color:#6c6a5e;transform:scaleX(0.9034);transform-origin:0 0;">USDJPY,H4</div>
<div class="t" style="left:335.6px;top:706.5px;font-size:11px;color:#6c6a5e;transform:scaleX(0.9122);transform-origin:0 0;">EURJPY,Daily</div>
<div class="t" style="left:423.4px;top:706.5px;font-size:11px;color:#6c6a5e;transform:scaleX(0.9190);transform-origin:0 0;">AUDNZD,Daily</div>
<div class="t" style="left:514.5px;top:706.5px;font-size:11px;color:#6c6a5e;transform:scaleX(0.9044);transform-origin:0 0;">USDCAD,H4</div>
<div class="t" style="left:593.7px;top:706.5px;font-size:11px;color:#6c6a5e;transform:scaleX(0.9012);transform-origin:0 0;">NZDUSD,Daily</div>
<div class="t" style="left:682.8px;top:706.5px;font-size:11px;color:#6c6a5e;transform:scaleX(0.8981);transform-origin:0 0;">AUDUSD,H4</div>
<div class="t" style="left:762.3px;top:706.5px;font-size:11px;color:#6c6a5e;transform:scaleX(0.9004);transform-origin:0 0;">XAUUSD,H4</div>
<div class="t" style="left:842.4px;top:706.5px;font-size:11px;color:#6c6a5e;transform:scaleX(0.9095);transform-origin:0 0;">GBPCHF,Daily</div>
<div class="t" style="left:930px;top:706.5px;font-size:11px;color:#6c6a5e;transform:scaleX(0.9134);transform-origin:0 0;">GBPJPY,Weekly</div>
<div class="t" style="left:1106.2px;top:706.5px;font-size:11px;color:#6c6a5e;transform:scaleX(0.9084);transform-origin:0 0;">EURGBP,Daily</div>
<div class="a" style="left:88px;top:706px;width:1px;height:13px;background:#6e6e64"></div>
<div class="a" style="left:168px;top:706px;width:1px;height:13px;background:#6e6e64"></div>
<div class="a" style="left:248px;top:706px;width:1px;height:13px;background:#6e6e64"></div>
<div class="a" style="left:324px;top:706px;width:1px;height:13px;background:#6e6e64"></div>
<div class="a" style="left:413px;top:706px;width:1px;height:13px;background:#6e6e64"></div>
<div class="a" style="left:504px;top:706px;width:1px;height:13px;background:#6e6e64"></div>
<div class="a" style="left:584px;top:706px;width:1px;height:13px;background:#6e6e64"></div>
<div class="a" style="left:673px;top:706px;width:1px;height:13px;background:#6e6e64"></div>
<div class="a" style="left:752px;top:706px;width:1px;height:13px;background:#6e6e64"></div>
<div class="a" style="left:832px;top:706px;width:1px;height:13px;background:#6e6e64"></div>
<div class="a" style="left:920px;top:706px;width:1px;height:13px;background:#6e6e64"></div>
<div class="a" style="left:1184px;top:706px;width:1px;height:13px;background:#6e6e64"></div>
<div class="a" style="left:1016px;top:703px;width:78px;height:18px;background:#fff;border:1px solid #000;border-top:none"></div>
<div class="t" style="left:1026.4px;top:706.5px;font-size:11px;color:#000;transform:scaleX(0.9087);transform-origin:0 0;">EURCHF,H1</div>
<svg width="24" height="10" viewBox="0 0 24 10" style="left:1255px;top:707px"><path d="M5 1v7l-4-3.500zM17 1v7l4-3.500z" fill="#b0b0b0"/></svg>
<div class="t" style="left:6px;top:729.5px;font-size:11px;color:#000;transform:scaleX(0.9964);transform-origin:0 0;">Для справки, нажмите F1</div>
<div class="t" style="left:568.6px;top:729.5px;font-size:11px;color:#000;transform:scaleX(0.9782);transform-origin:0 0;">Default</div>
<div class="a" style="left:563px;top:726px;width:1px;height:16px;background:#a0a0a0"></div><div class="a" style="left:564px;top:726px;width:1px;height:16px;background:#f8f8f8"></div>
<div class="a" style="left:672px;top:726px;width:1px;height:16px;background:#a0a0a0"></div><div class="a" style="left:673px;top:726px;width:1px;height:16px;background:#f8f8f8"></div>
<div class="a" style="left:773px;top:726px;width:1px;height:16px;background:#a0a0a0"></div><div class="a" style="left:774px;top:726px;width:1px;height:16px;background:#f8f8f8"></div>
<div class="a" style="left:845px;top:726px;width:1px;height:16px;background:#a0a0a0"></div><div class="a" style="left:846px;top:726px;width:1px;height:16px;background:#f8f8f8"></div>
<div class="a" style="left:916px;top:726px;width:1px;height:16px;background:#a0a0a0"></div><div class="a" style="left:917px;top:726px;width:1px;height:16px;background:#f8f8f8"></div>
<div class="a" style="left:985px;top:726px;width:1px;height:16px;background:#a0a0a0"></div><div class="a" style="left:986px;top:726px;width:1px;height:16px;background:#f8f8f8"></div>
<div class="a" style="left:1056px;top:726px;width:1px;height:16px;background:#a0a0a0"></div><div class="a" style="left:1057px;top:726px;width:1px;height:16px;background:#f8f8f8"></div>
<div class="a" style="left:1122px;top:726px;width:1px;height:16px;background:#a0a0a0"></div><div class="a" style="left:1123px;top:726px;width:1px;height:16px;background:#f8f8f8"></div>
<div class="t" style="left:1175.9px;top:729.5px;font-size:11px;color:#000;transform:scaleX(0.9642);transform-origin:0 0;">1918/2 kb</div>
<svg width="24" height="13" viewBox="0 0 24 13" style="left:1128px;top:728px" shape-rendering="crispEdges"><rect x="0" y="0" width="2" height="11" fill="#5a7a10"/><rect x="0" y="11" width="2" height="2" fill="#b01818"/><rect x="3" y="0" width="2" height="10" fill="#5a7a10"/><rect x="3" y="10" width="2" height="3" fill="#b01818"/><rect x="6" y="0" width="2" height="8" fill="#5a7a10"/><rect x="6" y="8" width="2" height="5" fill="#b01818"/><rect x="9" y="0" width="2" height="7" fill="#5a7a10"/><rect x="9" y="7" width="2" height="6" fill="#b01818"/><rect x="12" y="0" width="2" height="6" fill="#5a7a10"/><rect x="12" y="6" width="2" height="7" fill="#b01818"/><rect x="15" y="0" width="2" height="4" fill="#5a7a10"/><rect x="15" y="4" width="2" height="8" fill="#b01818"/><rect x="18" y="0" width="2" height="3" fill="#5a7a10"/><rect x="18" y="3" width="2" height="10" fill="#b01818"/><rect x="21" y="0" width="2" height="2" fill="#5a7a10"/><rect x="21" y="2" width="2" height="11" fill="#b01818"/></svg>
<svg width="14" height="14" viewBox="0 0 14 14" style="left:1268px;top:730px"><path d="M13 1L1 13M13 5L5 13M13 9L9 13" stroke="#a0a0a0" stroke-width="1"/><path d="M14 2L2 14M14 6L6 14M14 10L10 14" stroke="#fff" stroke-width="1"/></svg>
<div class="a" style="left:4px;top:744px;width:1280px;height:4px;background:linear-gradient(#5c5c5c 0,#5c5c5c 1px,#8c8c90 1px,#86868a 4px)"></div>
<div class="a" style="left:4px;top:744px;width:41px;height:4px;background:linear-gradient(#c05a00 0,#c05a00 1px,#ffa848 1px,#f08020 4px);border-top-right-radius:3px"></div>
</div></body></html>
